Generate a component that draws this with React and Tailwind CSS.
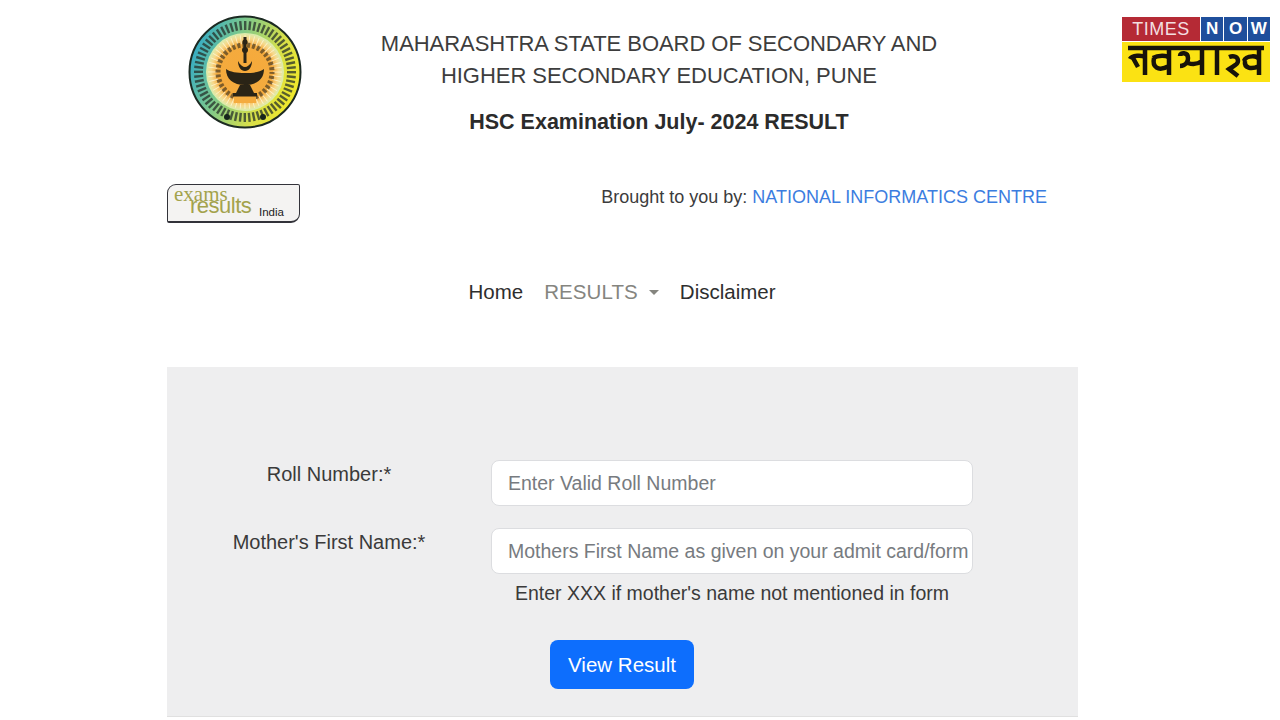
const F = { fontFamily: '"Liberation Sans", Arial, sans-serif' };

function Seal() {
  const spokes = Array.from({ length: 48 }, (_, i) => i * 7.5);
  const ticks = Array.from({ length: 64 }, (_, i) => i * 5.625);
  return (
    <svg width="114" height="114" viewBox="0 0 114 114" className="block">
      <defs>
        <linearGradient id="ring" x1="0" y1="0.3" x2="1" y2="0.7">
          <stop offset="0" stopColor="#2fa9c9" />
          <stop offset="0.35" stopColor="#7fc98a" />
          <stop offset="0.7" stopColor="#d8e04a" />
          <stop offset="1" stopColor="#f2e926" />
        </linearGradient>
        <radialGradient id="core">
          <stop offset="0" stopColor="#f6a93a" />
          <stop offset="0.72" stopColor="#f4ab3e" />
          <stop offset="0.86" stopColor="#f8d88a" />
          <stop offset="1" stopColor="#d9eeb0" />
        </radialGradient>
      </defs>
      <circle cx="57" cy="57" r="55.5" fill="url(#ring)" stroke="#1c2a22" strokeWidth="2" />
      {ticks.map((a) => (
        <rect key={a} x="56" y={a > 135 && a < 225 ? 7 : 6} width="2.4" height="9" fill="#26302a" opacity="0.75" transform={`rotate(${a} 57 57)`} />
      ))}
      <circle cx="57" cy="57" r="39" fill="url(#core)" />
      {spokes.map((a) => (
        <rect key={a} x="56.6" y="20" width="0.9" height="9" fill="#fff7d8" opacity="0.8" transform={`rotate(${a} 57 57)`} />
      ))}
      <circle cx="57" cy="57" r="27" fill="none" stroke="#4a3a20" strokeWidth="5" strokeDasharray="3 2" strokeDashoffset="1" opacity="0.7" />
      <path d="M40 21 L74 21 L70 36 L44 36Z" fill="#f4ab3e" opacity="0" />
      <rect x="46" y="76" width="22" height="12" fill="#f4ab3e" />
      <path d="M57 22v26" stroke="#2a2416" strokeWidth="3" />
      <circle cx="57" cy="27" r="2.6" fill="#2a2416" />
      <circle cx="57" cy="35" r="3" fill="#2a2416" />
      <path d="M38 54c4 3 11 4 19 4s15-1 19-4c0 10-7 16-19 16S38 64 38 54z" fill="#2a2416" />
      <path d="M50 46c2 4 5 6 7 6s5-2 7-6c0 6-3 10-7 10s-7-4-7-10z" fill="#2a2416" />
      <path d="M48 78h18l-4-8H52z" fill="#2a2416" />
      <rect x="45" y="78" width="24" height="3.5" fill="#2a2416" />
      <circle cx="39" cy="102" r="3" fill="#17251c" />
      <circle cx="75" cy="102" r="3" fill="#17251c" />
    </svg>
  );
}

function TimesNow() {
  return (
    <div className="w-[148px] h-[65px] flex flex-col" style={F}>
      <div className="flex h-[24px] gap-[1px]">
        <div className="w-[78px] bg-[#b52a35] text-[#f3dfe0] text-[18px] leading-[24px] text-center tracking-[0.5px]">TIMES</div>
        <div className="flex-1 grid grid-cols-3 gap-[1px] text-white font-bold text-[17px] leading-[24px] text-center">
          <div className="bg-[#1f4f9c]">N</div>
          <div className="bg-[#1f4f9c]">O</div>
          <div className="bg-[#1f4f9c]">W</div>
        </div>
      </div>
      <div className="flex-1 mt-[1px] bg-[#fbe213] flex items-center justify-center">
        <svg width="138" height="38" viewBox="0 0 138 38" aria-hidden="true">
          <g fill="none" stroke="#17130a" strokeWidth="4.5">
            <path d="M1 5h136" />
            <path d="M18 5v27M3 16c2-4 12-4 15-2M6 15l5 9" />
            <path d="M42 5v27M26 15c5-3 14-3 16 0M27 15c-2 9 4 14 15 8" />
            <path d="M75 5v27M53 13c0-4 8-4 8 2 0 8-8 8-8 8M61 20c5 2 10 1 14-2" />
            <path d="M90 5v27" />
            <path d="M102 14c5-2 9 0 9 4s-5 5-9 8l9 7" />
            <path d="M132 5v27M117 18c2-6 15-6 15-1M118 18c-1 7 6 9 14 5" />
          </g>
        </svg>
      </div>
    </div>
  );
}

export default function App() {
  return (
    <div className="relative w-[1280px] h-[720px] overflow-hidden bg-white text-[#212529]" style={F}>
      <div className="absolute left-[1122px] top-[17px]"><TimesNow /></div>

      <div className="ml-[167px] w-[911px] flex flex-col">
        <header className="h-[184px] flex">
          <div className="w-[134px] shrink-0 pt-[15px] pl-[21px]"><Seal /></div>
          <div className="w-[716px] pl-[0px] flex flex-col items-center">
            <div className="mt-[28px] text-[22px] leading-[32px] text-[#3d3d3d] text-center tracking-[-0.05px]">
              <div>MAHARASHTRA STATE BOARD OF SECONDARY AND</div>
              <div>HIGHER SECONDARY EDUCATION, PUNE</div>
            </div>
            <div className="mt-[14px] text-[21.5px] leading-[32px] font-bold text-[#2b2b2b]">HSC Examination July- 2024 RESULT</div>
          </div>
        </header>

        <div className="h-[39px] flex justify-between">
          <div className="w-[133px] h-[39px] rounded-tl-[9px] rounded-br-[9px] rounded-tr-[2px] rounded-bl-[2px] border border-[#33333a] border-b-[2px] bg-[#f4f3f2] relative overflow-hidden">
            <span className="absolute left-[6px] top-[-3px] text-[21px] leading-[24px] text-[#a3a24c]" style={{ fontFamily: '"Liberation Serif", serif' }}>exams</span>
            <span className="absolute left-[22px] top-[9px] text-[22px] leading-[24px] text-[#a3a24c] tracking-[-0.5px]">results</span>
            <span className="absolute left-[91px] top-[19px] text-[11.5px] leading-[16px] text-[#222]">India</span>
          </div>
          <div className="mr-[31px] text-[18px] leading-[26px] mt-[0px] text-[#3c3c3c]">
            Brought to you by: <span className="text-[#3b7de0]">NATIONAL INFORMATICS CENTRE</span>
          </div>
        </div>

        <nav className="h-[144px] pt-[56px] flex justify-center items-start gap-[21px] pr-[1px] text-[20.5px] leading-[26px]">
          <span className="text-[#2e2e2e]">Home</span>
          <span className="text-[#85857f] flex items-center tracking-[0.1px]">RESULTS
            <span className="ml-[11px] mt-[1px] w-0 h-0 border-x-[5px] border-x-transparent border-t-[5px] border-t-[#85857f]"></span>
          </span>
          <span className="text-[#2e2e2e]">Disclaimer</span>
        </nav>

        <main className="h-[350px] bg-[#eeeeef] border-b border-[#e0e0e0] pt-[93px]">
          <div className="grid grid-cols-[324px_482px] gap-y-[22px]">
            <label className="h-[46px] pt-[2px] text-center pr-[0px] pl-[0px] text-[20px] leading-[24px] text-[#3a3a3a]">Roll Number:*</label>
            <div className="h-[46px] rounded-[8px] border border-[#dcdde0] bg-white px-[16px] text-[19.5px] leading-[44px] text-[#777b80] whitespace-nowrap overflow-hidden">Enter Valid Roll Number</div>
            <label className="h-[46px] pt-[2px] text-center text-[20px] leading-[24px] text-[#3a3a3a]">Mother's First Name:*</label>
            <div className="h-[46px] rounded-[8px] border border-[#dcdde0] bg-white pl-[16px] pr-[15px] text-[19.5px] leading-[44px] text-[#777b80] whitespace-nowrap overflow-hidden">Mothers First Name as given on your admit card/form</div>
          </div>
          <div className="ml-[324px] w-[482px] text-center text-[19.5px] leading-[28px] mt-[5px] text-[#3a3a3a]">Enter XXX if mother's name not mentioned in form</div>
          <button className="block ml-[383px] mt-[33px] w-[144px] h-[49px] rounded-[8px] bg-[#0d6efd] text-white text-[20.5px] leading-[48px] text-center">View Result</button>
        </main>
      </div>
    </div>
  );
}
